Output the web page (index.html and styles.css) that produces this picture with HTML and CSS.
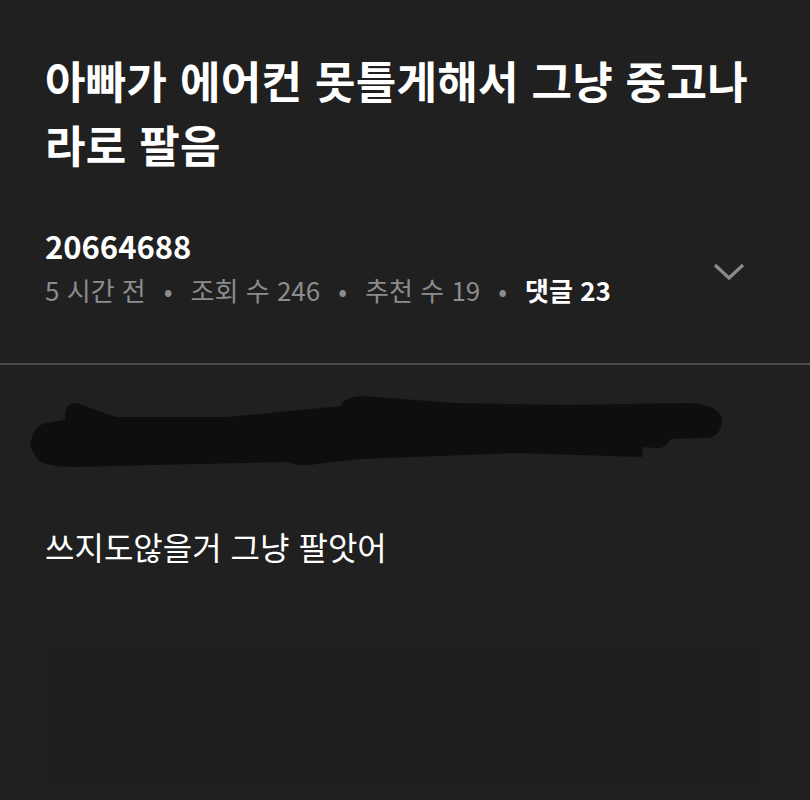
FILE: index.html
```html
<!DOCTYPE html>
<html lang="ko">
<head>
  <meta charset="UTF-8">
  <meta name="viewport" content="width=device-width, initial-scale=1.0">
  <title>게시글</title>
  <link rel="stylesheet" href="styles.css">
</head>
<body>
  <div class="post">
    <div class="post-header">
      <h1 class="title">아빠가 에어컨 못틀게해서 그냥 중고나라로 팔음</h1>
      <div class="info-row">
        <div class="info">
          <div class="author">20664688</div>
          <div class="meta">
            <span>5 시간 전</span>
            <span class="dot">•</span>
            <span>조회 수 246</span>
            <span class="dot">•</span>
            <span>추천 수 19</span>
            <span class="dot">•</span>
            <span class="comments">댓글 23</span>
          </div>
        </div>
        <button class="toggle">
          <svg width="32" height="20" viewBox="0 0 32 20">
            <path d="M2 3 L16 16 L30 3" fill="none" stroke="#8a8b8d" stroke-width="3.2"/>
          </svg>
        </button>
      </div>
    </div>

    <div class="post-body">
      <svg class="redacted" width="760" height="80" viewBox="0 390 760 80">
        <path d="M65 420 L65 412 Q68 402 77 403 Q95 410 116 417 L227 417 L341 406 Q343 397 362 396 L455 403 L568 405 L687 403 Q722 404 722 422 Q720 438 705 438 L671 439 Q664 450 656 448 L643 447 L642 457 L516 453 L362 459 Q330 462 310 465 Q295 466 289 462 L155 465 L77 467 Q40 467 36 457 Q28 445 31 442 Q33 426 46 423 Z" fill="#0e0e0e"/>
      </svg>

      <p class="text">쓰지도않을거 그냥 팔앗어</p>

      <div class="media"></div>
    </div>
  </div>
</body>
</html>
```

FILE: styles.css
```css
body, html {
  margin: 0;
  padding: 0;
  background-color: #202020;
  font-family: "Noto Sans CJK KR", "Noto Sans", sans-serif;
  color: #ffffff;
}

.post-header {
  padding: 48px 45px 0 45px;
  border-bottom: 2px solid #4b4b4b;
  height: 365px;
  box-sizing: border-box;
}

.title {
  margin: 0;
  font-size: 44px;
  font-weight: 700;
  line-height: 64px;
  letter-spacing: 0.3px;
}

.info-row {
  display: flex;
  justify-content: space-between;
  align-items: center;
  margin-top: 50px;
}

.author {
  font-size: 31px;
  font-weight: 700;
  line-height: 40px;
}

.meta {
  font-size: 26px;
  line-height: 48px;
  color: #8b8c8e;
  display: flex;
  gap: 18px;
}

.meta .comments {
  color: #ffffff;
  font-weight: 700;
}

.toggle {
  background: none;
  border: none;
  padding: 0;
  margin: 4px 20px 0 0;
  display: flex;
}

.post-body {
  padding: 25px 0 0 0;
}

.redacted {
  display: block;
}

.text {
  margin: 56px 45px 0 45px;
  font-size: 32px;
  line-height: 40px;
}

.media {
  margin: 80px 45px 0 46px;
  height: 140px;
  background-color: #1e1f21;
}
```
